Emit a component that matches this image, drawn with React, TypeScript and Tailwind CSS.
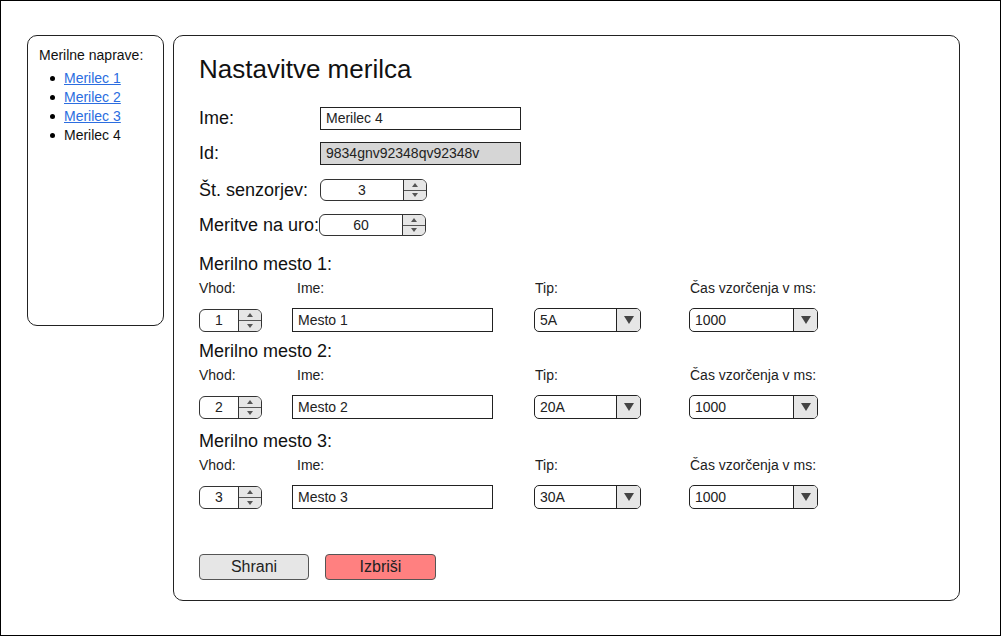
import React from "react";

const devices = ["Merilec 1", "Merilec 2", "Merilec 3", "Merilec 4"];

const places = [
  { n: 1, vhod: "1", name: "Mesto 1", tip: "5A", cas: "1000", mt: "mt-[18px]" },
  { n: 2, vhod: "2", name: "Mesto 2", tip: "20A", cas: "1000", mt: "mt-[9px]" },
  { n: 3, vhod: "3", name: "Mesto 3", tip: "30A", cas: "1000", mt: "mt-[12px]" },
];

function SpinArrows() {
  return (
    <div className="w-[23px] flex flex-col border-l border-[#333] bg-[#e6e6e6]">
      <div className="flex-1 flex items-center justify-center border-b border-[#555]">
        <svg width="6" height="4" viewBox="0 0 6 4">
          <path d="M0 4 L6 4 L3 0 Z" fill="#555" />
        </svg>
      </div>
      <div className="flex-1 flex items-center justify-center">
        <svg width="6" height="4" viewBox="0 0 6 4">
          <path d="M0 0 L6 0 L3 4 Z" fill="#555" />
        </svg>
      </div>
    </div>
  );
}

function Spinner({ value, className }: { value: string; className: string }) {
  return (
    <div
      className={`flex border border-[#333] rounded-[6px] overflow-hidden bg-white ${className}`}
    >
      <div className="flex-1 flex items-center justify-center text-[14px] text-[#222]">
        {value}
      </div>
      <SpinArrows />
    </div>
  );
}

function Select({ value, className }: { value: string; className: string }) {
  return (
    <div
      className={`flex h-[24px] border border-[#222] rounded-[5px] overflow-hidden bg-white ${className}`}
    >
      <div className="flex-1 flex items-center pl-[5px] text-[14px] text-[#222]">
        {value}
      </div>
      <div className="w-[24px] flex items-center justify-center border-l border-[#222] bg-[#e6e6e6]">
        <svg width="10" height="8" viewBox="0 0 10 8">
          <path d="M0 0 L10 0 L5 8 Z" fill="#444" />
        </svg>
      </div>
    </div>
  );
}

function TextBox({ value, className }: { value: string; className: string }) {
  return (
    <div
      className={`flex items-center pl-[5px] border border-[#222] text-[14px] text-[#222] ${className}`}
    >
      {value}
    </div>
  );
}

export default function App() {
  return (
    <div
      className="w-[1001px] h-[636px] border border-black bg-white flex items-start pt-[34px] pl-[26px] gap-[9px] text-[#111]"
      style={{ fontFamily: '"Liberation Sans", Arial, sans-serif' }}
    >
      {/* sidebar */}
      <div className="w-[137px] h-[291px] border border-[#222] rounded-[10px] pt-[11px] pl-[11px]">
        <p className="text-[14px] leading-[16px]">Merilne naprave:</p>
        <ul className="mt-[6px]">
          {devices.map((d, i) => (
            <li key={d} className="flex items-center h-[19px] text-[14px] leading-[19px]">
              <span className="ml-[11px] w-[5px] h-[5px] rounded-full bg-black" />
              {i < 3 ? (
                <a href="#" className="ml-[9px] text-[#2b6de0] underline">
                  {d}
                </a>
              ) : (
                <span className="ml-[9px]">{d}</span>
              )}
            </li>
          ))}
        </ul>
      </div>

      {/* main panel */}
      <div className="w-[787px] h-[566px] border border-[#222] rounded-[10px] pt-[18px] pl-[25px]">
        <h1 className="text-[26px] leading-[30px]">Nastavitve merilca</h1>

        <div className="mt-[23px] flex items-center h-[23px]">
          <span className="w-[121px] text-[18px] leading-[21px]">Ime:</span>
          <TextBox value="Merilec 4" className="w-[201px] h-[23px]" />
        </div>
        <div className="mt-[12px] flex items-center h-[23px]">
          <span className="w-[121px] text-[18px] leading-[21px]">Id:</span>
          <TextBox value="9834gnv92348qv92348v" className="w-[201px] h-[23px] bg-[#d6d6d6]" />
        </div>
        <div className="mt-[14px] flex items-center h-[22px]">
          <span className="w-[121px] text-[18px] leading-[21px]">Št. senzorjev:</span>
          <Spinner value="3" className="w-[107px] h-[22px]" />
        </div>
        <div className="mt-[13px] flex items-center h-[22px]">
          <span className="w-[120px] whitespace-nowrap text-[18px] leading-[21px]">
            Meritve na uro:
          </span>
          <Spinner value="60" className="w-[107px] h-[22px]" />
        </div>

        {places.map((p) => (
          <div key={p.n} className={p.mt}>
            <h2 className="text-[18px] leading-[21px]">Merilno mesto {p.n}:</h2>
            <div className="mt-[5px] grid grid-cols-[93px_242px_155px_129px] text-[14px] leading-[16px] text-[#222]">
              <span>Vhod:</span>
              <span className="pl-[5px]">Ime:</span>
              <span className="pl-[1px]">Tip:</span>
              <span className="pl-[1px]">Čas vzorčenja v ms:</span>
            </div>
            <div className="mt-[12px] grid grid-cols-[93px_242px_155px_129px] items-center">
              <Spinner value={p.vhod} className="w-[63px] h-[23px]" />
              <TextBox value={p.name} className="w-[201px] h-[24px]" />
              <Select value={p.tip} className="w-[107px]" />
              <Select value={p.cas} className="w-[129px]" />
            </div>
          </div>
        ))}

        <div className="mt-[45px] flex gap-[16px]">
          <button className="w-[110px] h-[26px] bg-[#e6e6e6] border border-[#555] rounded-[4px] text-[16px] text-[#222]">
            Shrani
          </button>
          <button className="w-[111px] h-[26px] bg-[#ff8080] border border-[#555] rounded-[4px] text-[16px] text-[#222]">
            Izbriši
          </button>
        </div>
      </div>
    </div>
  );
}
